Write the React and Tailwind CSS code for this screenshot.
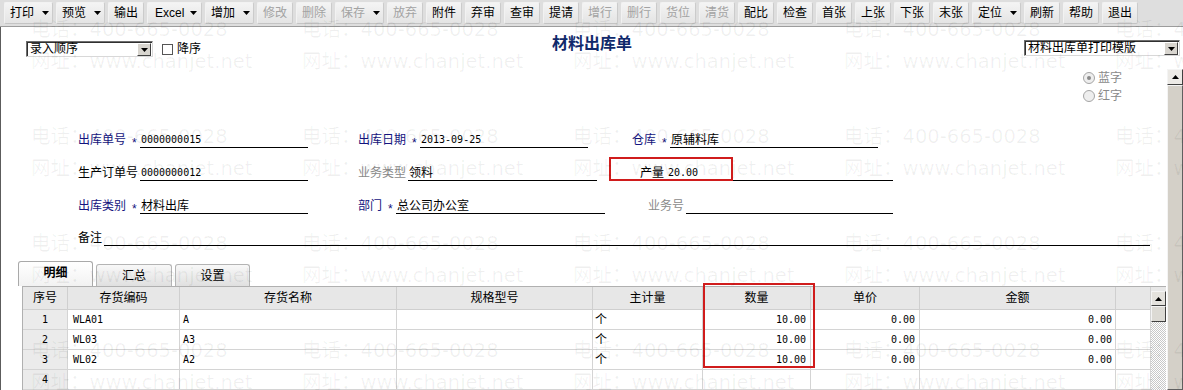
import React from 'react';

const FONT = "font-['Liberation_Sans','Noto_Sans_CJK_SC',sans-serif]";
const MONO = "font-['DejaVu_Sans_Mono','Noto_Sans_CJK_SC',monospace] text-[10px]";

const Tri = ({ up = false }) => (
  <svg width="7" height="4" viewBox="0 0 7 4" className="block">
    {up ? <polygon points="0,4 7,4 3.5,0" fill="#000" /> : <polygon points="0,0 7,0 3.5,4" fill="#000" />}
  </svg>
);

const toolbar = [
  { t: '打印', dd: true }, { t: '预览', dd: true }, { t: '输出' }, { t: 'Excel', dd: true, excel: true },
  { t: '增加', dd: true }, { t: '修改', dis: true }, { t: '删除', dis: true }, { t: '保存', dd: true, dis: true },
  { t: '放弃', dis: true }, { t: '附件' }, { t: '弃审' }, { t: '查审' }, { t: '提请' },
  { t: '增行', dis: true }, { t: '删行', dis: true }, { t: '货位', dis: true }, { t: '清货', dis: true },
  { t: '配比' }, { t: '检查' }, { t: '首张' }, { t: '上张' }, { t: '下张' }, { t: '末张' },
  { t: '定位', dd: true }, { t: '刷新' }, { t: '帮助' }, { t: '退出' },
];

function Toolbar() {
  return (
    <div className="flex h-[27px] items-center gap-[3px] border-b border-[#9c9c9c] bg-[#dedede] pl-[4px]">
      {toolbar.map((b) => (
        <div
          key={b.t}
          className={
            'flex h-[22px] items-center rounded-[2px] border border-t-[#f2f2f2] border-l-[#f2f2f2] border-r-[#cbcbcb] border-b-[#c4c4c4] bg-gradient-to-b from-[#f4f4f4] to-[#e4e4e4] ' +
            (b.excel ? 'w-[55px] justify-between pl-[7px] pr-[4px]' : b.dd ? 'w-[49px] justify-between pl-[5px] pr-[3px]' : 'w-[36px] justify-center')
          }
        >
          <span className={'text-[12px] leading-[14px] ' + (b.dis ? 'text-[#a3a3a3]' : 'text-black')}>{b.t}</span>
          {b.dd && <Tri />}
        </div>
      ))}
    </div>
  );
}

function Select({ text, w }) {
  return (
    <div className={'flex h-[16px] border border-t-[#6e6e6e] border-l-[#6e6e6e] border-r-[#d8d8d8] border-b-[#d8d8d8] bg-white shadow-[inset_1px_1px_0_#303030] ' + w}>
      <span className="flex-1 pl-[3px] pt-[1px] text-[12px] leading-[13px] text-black">{text}</span>
      <span className="mr-px mt-px flex h-[13px] w-[14px] items-center justify-center border border-t-[#ffffff] border-l-[#ffffff] border-r-[#404040] border-b-[#404040] bg-[#d8d5cf]">
        <Tri />
      </span>
    </div>
  );
}

function TopStrip() {
  return (
    <div className="grid h-[42px] grid-cols-[1fr_auto_1fr]">
      <div className="flex items-start pl-[25px] pt-[14px]">
        <Select text="录入顺序" w="w-[127px]" />
        <span className="ml-[9px] mt-[3px] h-[11px] w-[11px] border border-[#555555] bg-white" />
        <span className="ml-[4px] mt-[1px] text-[12px] leading-[14px]">降序</span>
      </div>
      <div className="pt-[7px] text-[16px] font-bold leading-[20px] text-[#10296b]">材料出库单</div>
      <div className="flex justify-end pr-[3px] pt-[13px]">
        <Select text="材料出库单打印模版" w="w-[156px]" />
      </div>
    </div>
  );
}

function Radio({ checked, label }) {
  return (
    <div className="flex h-[18px] items-center gap-[3px]">
      <span className="flex h-[12px] w-[12px] items-center justify-center rounded-full border border-[#a5a5a5] bg-[#eeeeee]">
        {checked && <span className="h-[4px] w-[4px] rounded-full bg-[#8a8a8a]" />}
      </span>
      <span className="text-[12px] leading-[14px] text-[#8a8a8a]">{label}</span>
    </div>
  );
}

const NAVY = 'text-[#14147e]';

function Field({ ml, lw, label, color = 'text-black', star, uw, value, mono, children }) {
  return (
    <div className={'relative flex items-end ' + ml}>
      <div className={'flex h-[16px] items-center ' + lw}>
        <span className={'text-[12px] leading-[14px] ' + color}>{label}</span>
        {star && <span className={'ml-[6px] translate-y-[3px] text-[12px] leading-[12px] ' + NAVY}>*</span>}
      </div>
      <div className={'flex h-[16px] items-center border-b border-black pl-[1px] ' + uw}>
        <span className={mono ? MONO + ' leading-[12px] text-black' : 'text-[12px] leading-[14px] text-black'}>{value}</span>
      </div>
      {children}
    </div>
  );
}

function Form() {
  return (
    <div className="mt-[10px] flex flex-col">
      <div className="flex h-[33px] items-end">
        <Field ml="ml-[77px]" lw="w-[62px]" label="出库单号" color={NAVY} star uw="w-[168px]" value="0000000015" mono />
        <Field ml="ml-[50px]" lw="w-[62px]" label="出库日期" color={NAVY} star uw="w-[168px]" value="2013-09-25" mono />
        <Field ml="ml-[44px]" lw="w-[38px]" label="仓库" color={NAVY} star uw="w-[208px]" value="原辅料库" />
      </div>
      <div className="flex h-[33px] items-end">
        <Field ml="ml-[77px]" lw="w-[62px]" label="生产订单号" uw="w-[168px]" value="0000000012" mono />
        <Field ml="ml-[50px]" lw="w-[50px]" label="业务类型" color="text-[#8a8a8a]" uw="w-[189px]" value="领料" />
        <Field ml="ml-[43px]" lw="w-[27px]" label="产量" uw="w-[226px]" value="20.00" mono>
          <div className="absolute left-[-31px] top-[-8px] h-[24px] w-[124px] border-2 border-[#d01c1c]" />
        </Field>
      </div>
      <div className="flex h-[33px] items-end">
        <Field ml="ml-[77px]" lw="w-[62px]" label="出库类别" color={NAVY} star uw="w-[168px]" value="材料出库" />
        <Field ml="ml-[50px]" lw="w-[38px]" label="部门" color={NAVY} star uw="w-[209px]" value="总公司办公室" />
        <Field ml="ml-[43px]" lw="w-[38px]" label="业务号" color="text-[#8a8a8a]" uw="w-[207px]" value="" />
      </div>
      <div className="flex h-[32px] items-end">
        <Field ml="ml-[77px]" lw="w-[26px]" label="备注" uw="w-[1046px]" value="" />
      </div>
    </div>
  );
}

function Tabs() {
  return (
    <div className="mt-[15px] flex h-[25px] items-end pl-[17px]">
      <div className="flex h-[25px] w-[75px] items-center justify-center rounded-t-[3px] border border-b-0 border-[#a9a9a9] bg-gradient-to-b from-[#ffffff] to-[#f2f2f2] pb-[2px] text-[12px] font-bold">明细</div>
      <div className="ml-[3px] flex h-[22px] w-[76px] items-center justify-center rounded-t-[3px] border border-b-0 border-[#b4b4b4] bg-gradient-to-b from-[#f8f8f8] to-[#e0e0e0] text-[12px]">汇总</div>
      <div className="ml-[3px] flex h-[22px] w-[75px] items-center justify-center rounded-t-[3px] border border-b-0 border-[#b4b4b4] bg-gradient-to-b from-[#f8f8f8] to-[#e0e0e0] text-[12px]">设置</div>
    </div>
  );
}

const cols = [
  { w: 'w-[45px]', h: '序号', a: 'justify-center', g: true },
  { w: 'w-[112px]', h: '存货编码', a: 'justify-start pl-[5px]' },
  { w: 'w-[217px]', h: '存货名称', a: 'justify-start pl-[3px]' },
  { w: 'w-[196px]', h: '规格型号', a: 'justify-start pl-[3px]' },
  { w: 'w-[110px]', h: '主计量', a: 'justify-start pl-[2px]' },
  { w: 'w-[108px]', h: '数量', a: 'justify-end pr-[4px]' },
  { w: 'w-[109px]', h: '单价', a: 'justify-end pr-[4px]' },
  { w: 'w-[196px]', h: '金额', a: 'justify-end pr-[3px]' },
  { w: 'w-[35px]', h: '', a: '' },
];

const rows = [
  ['1', 'WLA01', 'A', '', '个', '10.00', '0.00', '0.00', ''],
  ['2', 'WL03', 'A3', '', '个', '10.00', '0.00', '0.00', ''],
  ['3', 'WL02', 'A2', '', '个', '10.00', '0.00', '0.00', ''],
  ['4', '', '', '', '', '', '', '', ''],
];

function Table() {
  return (
    <div className="relative ml-[21px] flex w-[1144px]">
      <div className="w-[1129px] border-l border-t border-[#b0b0b0]">
        <div className="flex h-[23px] border-b border-[#cfcfcf] bg-[#e7e7e7]">
          {cols.map((c, i) => (
            <div key={i} className={'flex items-center justify-center border-r border-[#cfcfcf] text-[12px] leading-[14px] ' + c.w}>
              {c.h}
            </div>
          ))}
        </div>
        {rows.map((r, ri) => (
          <div key={ri} className="flex h-[20px] border-b border-[#d4d4d4]">
            {cols.map((c, i) => (
              <div
                key={i}
                className={
                  'flex items-center border-r border-[#d4d4d4] ' + c.w + ' ' + c.a + ' ' + (c.g ? 'bg-[#ebebeb]' : 'bg-white')
                }
              >
                {r[i] === '个' ? (
                  <span className="text-[12px] leading-[14px]">{r[i]}</span>
                ) : (
                  <span className={MONO + ' leading-[12px] text-black'}>{r[i]}</span>
                )}
              </div>
            ))}
          </div>
        ))}
      </div>
      <div className="flex w-[15px] flex-col border-t border-[#b0b0b0]">
        <div className="h-[4px] bg-[#e7e7e7]" />
        <div className="flex h-[15px] items-center justify-center border border-t-[#f4f4f4] border-l-[#f4f4f4] border-r-[#404040] border-b-[#404040] bg-[#e4e2dd]">
          <Tri up />
        </div>
        <div className="h-[16px] border border-t-[#f4f4f4] border-l-[#f4f4f4] border-r-[#404040] border-b-[#404040] bg-[#dcdad4]" />
        <div className="flex-1 bg-[repeating-conic-gradient(#c8c8c8_0%_25%,#ffffff_0%_50%)] bg-[length:2px_2px]" />
      </div>
      <div className="absolute left-[681px] top-[-3px] h-[85px] w-[112px] border-2 border-[#d01c1c]" />
    </div>
  );
}

function OuterScroll() {
  return (
    <div className="flex w-[16px] flex-col pt-0">
      <div className="flex h-[16px] items-center justify-center border border-t-[#f4f4f4] border-l-[#f4f4f4] border-r-[#404040] border-b-[#404040] bg-[#eceae6]">
        <Tri up />
      </div>
      <div className="flex-1 border border-t-[#f4f4f4] border-l-[#f4f4f4] border-r-[#606060] border-b-[#606060] bg-[#d4d0c8]" />
    </div>
  );
}

function Watermark() {
  const xs = [31, 302, 573, 844, 1115];
  const tel = [18, 125, 232, 339];
  const web = [50, 157, 264, 371];
  const cls =
    "absolute whitespace-nowrap font-['DejaVu_Sans','Noto_Sans_CJK_SC',sans-serif] text-[19.5px] leading-[24px] text-black/[0.06]";
  return (
    <div className="pointer-events-none absolute inset-0">
      {tel.map((y) =>
        xs.map((x) => (
          <span key={'t' + x + '-' + y} className={cls} style={{ left: x, top: y }}>
            电话：400-665-0028
          </span>
        ))
      )}
      {web.map((y) =>
        xs.map((x) => (
          <span key={'w' + x + '-' + y} className={cls} style={{ left: x, top: y }}>
            网址：www.chanjet.net
          </span>
        ))
      )}
    </div>
  );
}

export default function App() {
  return (
    <div className={'relative h-[390px] w-[1183px] overflow-hidden bg-white text-[12px] text-black ' + FONT}>
      <Toolbar />
      <div className="flex h-[363px] flex-col border-l border-[#5c5c5c]">
        <TopStrip />
        <div className="flex min-h-0 flex-1">
          <div className="flex min-w-0 flex-1 flex-col overflow-hidden">
            <div className="flex flex-col items-end pr-[45px]">
              <div className="flex flex-col">
                <Radio checked label="蓝字" />
                <Radio label="红字" />
              </div>
            </div>
            <Form />
            <Tabs />
            <Table />
          </div>
          <OuterScroll />
        </div>
      </div>
      <Watermark />
    </div>
  );
}
